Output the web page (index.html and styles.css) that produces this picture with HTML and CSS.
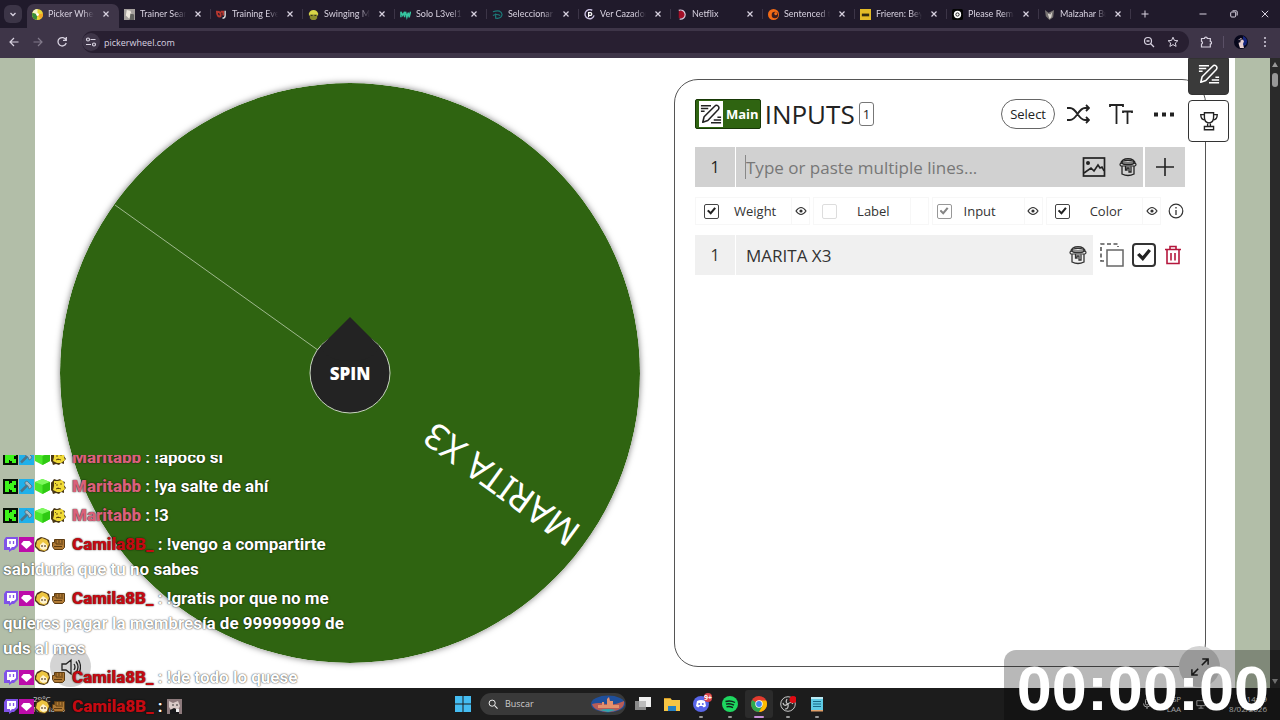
FILE: index.html
```
<!DOCTYPE html>
<html lang="es">
<head>
    <meta charset="UTF-8">
    <title>Picker Wheel</title>
    <link rel="stylesheet" href="styles.css">
</head>
<body>

<!-- shared icons -->
<svg class="sprite" aria-hidden="true">
    <symbol id="close" viewBox="0 0 8 8"><path d="M1.5 1.5l5 5M6.5 1.5l-5 5" fill="none" stroke="currentColor" stroke-width="1.2"/></symbol>
    <symbol id="edit" viewBox="0 0 24 24">
        <path d="M1 3h11M1 6h8M1 9h4M19 15.500h4M15 18.500h8M12 21.500h11" fill="none" stroke="currentColor" stroke-width="1.800"/>
        <path d="M3 21l1.500-6L16 3.500a2.500 2.500 0 0 1 4 3.500L8.500 19z" fill="none" stroke="currentColor" stroke-width="1.700" stroke-linejoin="round"/>
    </symbol>
    <symbol id="bucket" viewBox="0 0 20 20">
        <path d="M3 7C2 0 18 0 17 7" fill="none" stroke="currentColor" stroke-width="1.300"/>
        <ellipse cx="10" cy="5.500" rx="6" ry="2.200" fill="none" stroke="currentColor" stroke-width="1.300"/>
        <rect x="2" y="6" width="16" height="3" rx="1.500" fill="none" stroke="currentColor" stroke-width="1.200"/>
        <path d="M4 9v8q6 3 12 0V9M7.500 9v4h1.500v-2h2v4h2V9.500" fill="none" stroke="currentColor" stroke-width="1.300"/>
    </symbol>
    <symbol id="eye" viewBox="0 0 12 10"><path d="M1 5Q6-2 11 5Q6 12 1 5z" fill="none" stroke="currentColor" stroke-width="1.200"/><circle cx="6" cy="5" r="1.600" fill="currentColor"/></symbol>

    <symbol id="b-kick" viewBox="0 0 15 15"><path d="M0 0h15v15H0z" fill="#061006"/><path d="M2 2h4v3h1V4h2V2h4v4h-2v3h2v4H9v-2H7v-1H6v3H2z" fill="#3df51a"/></symbol>
    <symbol id="b-mod" viewBox="0 0 15 15"><path d="M0 0h15v15H0z" fill="#1fb0ea"/><path d="M2 12.500l6-6" stroke="#4f7488" stroke-width="2.500"/><path d="M6 3l2-1 5 5-1 2-2 1-1-3-3-2z" fill="#a4bcc6" stroke="#4a6a7a" stroke-width=".7"/></symbol>
    <symbol id="b-cube" viewBox="0 0 15 15"><path d="M7.500 0L15 3v8l-7.500 4L0 11V3z" fill="#4be82a"/><path d="M0 3l7.500-3L15 3 7.500 6z" fill="#7cf95c"/><path d="M7.500 6L15 3v8l-7.500 4z" fill="#2fc913"/></symbol>
    <symbol id="b-face" viewBox="0 0 15 15"><path d="M3 0l3 1 3-1 2 2 3 1-1 3 2 3-2 2v3l-3-1-2 2-3-1-3 1-1-3-3-2 2-3-1-3 2-1z" fill="#493715"/><path d="M3 2l4 0 4-1 2 3 0 3 1 3-4 3-4 0-4-2 1-4z" fill="#f0da36"/><path d="M5 6h2M9 5h2M5 10l2-1 3 1M4 4l1 1" stroke="#6b5010"/></symbol>
    <symbol id="b-twitch" viewBox="0 0 15 15"><path d="M3 0h12v9l-4 4H9l-3 2v-2H1V3z" fill="#8052e8"/><path d="M4 2h9v6l-2 2H9l-2 2v-2H4z" fill="#fff"/><path d="M7 4v3M10.500 4v3" stroke="#8052e8" stroke-width="1.300"/></symbol>
    <symbol id="b-gem" viewBox="0 0 15 15"><path d="M0 0h15v15H0z" fill="#bd0caa"/><path d="M4.500 4h6L13 7l-5.500 5L2 7z" fill="#fff"/></symbol>
    <symbol id="b-blond" viewBox="0 0 15 15"><path d="M2 2l4-2 4 1 4 2 1 5-2 5-4 2-5-1-4-4V6z" fill="#4c3519"/><path d="M2 4l5-3 5 2 2 4-2 5-2 2-5-1-4-4z" fill="#edc541"/><path d="M5 8l3-3 4 3v4l-4 1-3-2z" fill="#fff3cf"/><path d="M7 8v2M10 8v2" stroke="#3b2511"/></symbol>
    <symbol id="b-fist" viewBox="0 0 15 15"><path d="M3.500 2.500h10v8l-2 2h-8l-2-3v-4h2z" fill="#b07a35" stroke="#5d3c12"/><path d="M5 3v4h7M8 3v3M11 3v3M3 9.500h8" fill="none" stroke="#5d3c12"/></symbol>
</svg>

<header class="browser">
    <div class="tab-strip">
        <button class="tab-search" aria-label="Search tabs"><svg viewBox="0 0 8 8"><path d="M1.500 3L4 5.500 6.500 3" fill="none" stroke="currentColor" stroke-width="1.300"/></svg></button>
        <nav class="tabs">
            <div class="tab active">
                <svg class="favicon" viewBox="0 0 12 12"><circle cx="6" cy="6" r="6" fill="#e9d736"/><path d="M6 6V0a6 6 0 0 0-5.500 4z" fill="#f2f2c8"/><path d="M6 6L.5 4A6 6 0 0 0 5 12z" fill="#378d38"/><path d="M6 6l6-1a6 6 0 0 1-3 6z" fill="#f5a524"/><circle cx="6" cy="6" r="1.500" fill="#fff"/></svg>
                <span class="tab-title">Picker Wheel</span><button class="tab-close" aria-label="Close"><svg><use href="#close"/></svg></button>
            </div>
            <div class="tab">
                <svg class="favicon" viewBox="0 0 12 12"><path d="M0 0h12v12H0z" fill="#a6a19e"/><path d="M3 1l4 1 2 5-3 4-4-4z" fill="#eee8df"/><path d="M7 5l4 1v6H6z" fill="#60615e"/></svg>
                <span class="tab-title">Trainer Search</span><button class="tab-close" aria-label="Close"><svg><use href="#close"/></svg></button>
            </div>
            <div class="tab">
                <svg class="favicon" viewBox="0 0 12 12"><path d="M1 3q5 0 4 5-4 1-4-5zM5 3h3v4" fill="none" stroke="#b5372f" stroke-width="2"/><path d="M10 2v5q0 3-3 3" fill="none" stroke="#ddd" stroke-width="1.500"/></svg>
                <span class="tab-title">Training Events</span><button class="tab-close" aria-label="Close"><svg><use href="#close"/></svg></button>
            </div>
            <div class="tab">
                <svg class="favicon" viewBox="0 0 12 12"><path d="M1 5q1-4 5-4t5 4v2H1z" fill="#d9d649"/><path d="M2 6h8v4l-2 2H4l-2-2z" fill="#8c8d2d"/><path d="M3 7h2M7 7h2" stroke="#222"/></svg>
                <span class="tab-title">Swinging Maniac</span><button class="tab-close" aria-label="Close"><svg><use href="#close"/></svg></button>
            </div>
            <div class="tab">
                <svg class="favicon" viewBox="0 0 12 12"><path d="M1 9V3l2 4 2-4v6M6 3l1.500 6L9 4l1 5 1.500-6" fill="none" stroke="#35c6a0" stroke-width="1.600"/></svg>
                <span class="tab-title">Solo L3vel1ng</span><button class="tab-close" aria-label="Close"><svg><use href="#close"/></svg></button>
            </div>
            <div class="tab">
                <svg class="favicon" viewBox="0 0 12 12"><path d="M1 3q9-3 10 3-1 5-7 4V5M1 7q4-2 8 0" fill="none" stroke="#1c7a79" stroke-width="1.300"/></svg>
                <span class="tab-title">Seleccionar perfil</span><button class="tab-close" aria-label="Close"><svg><use href="#close"/></svg></button>
            </div>
            <div class="tab">
                <svg class="favicon" viewBox="0 0 12 12"><path d="M9 1.500A5 5 0 1 0 11 7" fill="none" stroke="#c8bfe0" stroke-width="1.500"/><path d="M5 9V4h2a1.500 1.500 0 0 1 0 3H5" fill="none" stroke="#fff" stroke-width="1.300"/></svg>
                <span class="tab-title">Ver Cazadores</span><button class="tab-close" aria-label="Close"><svg><use href="#close"/></svg></button>
            </div>
            <div class="tab">
                <svg class="favicon" viewBox="0 0 12 12"><path d="M3 2h3a4 4 0 0 1 0 8H3z" fill="#a30f27"/><path d="M3 1.500a5 5 0 1 1 1 9.500" fill="none" stroke="#dcc8dc" stroke-width="1.300"/></svg>
                <span class="tab-title">Netflix</span><button class="tab-close" aria-label="Close"><svg><use href="#close"/></svg></button>
            </div>
            <div class="tab">
                <svg class="favicon" viewBox="0 0 12 12"><circle cx="6" cy="6" r="6" fill="#f36b16"/><circle cx="7.500" cy="6.500" r="3.500" fill="#3b1d20"/><circle cx="8.500" cy="5" r="1.700" fill="#f36b16"/></svg>
                <span class="tab-title">Sentenced to Be</span><button class="tab-close" aria-label="Close"><svg><use href="#close"/></svg></button>
            </div>
            <div class="tab">
                <svg class="favicon" viewBox="0 0 12 12"><path d="M0 0h12v12H0z" fill="#e3bb27"/><path d="M2 5h8v3H2z" fill="#332b10"/></svg>
                <span class="tab-title">Frieren: Beyond</span><button class="tab-close" aria-label="Close"><svg><use href="#close"/></svg></button>
            </div>
            <div class="tab">
                <svg class="favicon" viewBox="0 0 12 12"><rect width="12" height="12" rx="2" fill="#030303"/><circle cx="6" cy="6" r="4" fill="#fff"/><circle cx="6" cy="6" r="1.800" fill="none" stroke="#111"/></svg>
                <span class="tab-title">Please Remain</span><button class="tab-close" aria-label="Close"><svg><use href="#close"/></svg></button>
            </div>
            <div class="tab">
                <svg class="favicon" viewBox="0 0 12 12"><path d="M1 1l4 3 6-3-1 8-4 3-4-4z" fill="#777372"/><path d="M4 5l3 1 2-3-1 6-2 2z" fill="#d8d3cd"/></svg>
                <span class="tab-title">Malzahar Build</span><button class="tab-close" aria-label="Close"><svg><use href="#close"/></svg></button>
            </div>
        </nav>
        <button class="new-tab" aria-label="New tab"><svg viewBox="0 0 8 8"><path d="M4 .5v7M.5 4h7" stroke="currentColor" fill="none"/></svg></button>
        <div class="window-buttons">
            <button aria-label="Minimize"><svg viewBox="0 0 8 8"><path d="M.5 4h7" stroke="currentColor"/></svg></button>
            <button aria-label="Restore"><svg viewBox="0 0 8 8"><rect x=".7" y="2" width="5" height="5" rx="1" fill="none" stroke="currentColor"/><path d="M2.500.8h3.700a1 1 0 0 1 1 1v3.700" fill="none" stroke="currentColor"/></svg></button>
            <button aria-label="Close window"><svg viewBox="0 0 8 8"><path d="M.8.8l6.400 6.400M7.200.8L.8 7.200" stroke="currentColor"/></svg></button>
        </div>
    </div>
    <div class="toolbar">
        <button aria-label="Back"><svg viewBox="0 0 12 12"><path d="M10.500 6H2M6 2L2 6l4 4" fill="none" stroke="currentColor" stroke-width="1.200"/></svg></button>
        <button class="dim" aria-label="Forward"><svg viewBox="0 0 12 12"><path d="M1.500 6H10M6 2l4 4-4 4" fill="none" stroke="currentColor" stroke-width="1.200"/></svg></button>
        <button aria-label="Reload"><svg viewBox="0 0 12 12"><path d="M10 4A4.200 4.200 0 1 0 10.200 7M10.300 1v3.300H7" fill="none" stroke="currentColor" stroke-width="1.300"/></svg></button>
        <div class="omnibox">
            <button class="site-info" aria-label="Site information"><svg viewBox="0 0 12 12"><path d="M5.500 3.500h5M1 8.500h5" stroke="currentColor" stroke-width="1.200"/><circle cx="3" cy="3.500" r="1.500" fill="none" stroke="currentColor" stroke-width="1.200"/><circle cx="9" cy="8.500" r="1.500" fill="none" stroke="currentColor" stroke-width="1.200"/></svg></button>
            <input type="text" value="pickerwheel.com" aria-label="Address">
            <button aria-label="Zoom"><svg viewBox="0 0 12 12"><circle cx="5" cy="5" r="3.500" fill="none" stroke="currentColor" stroke-width="1.200"/><path d="M7.500 7.500l3.500 3.500M3.500 5h3" stroke="currentColor" stroke-width="1.300"/></svg></button>
            <button aria-label="Bookmark"><svg viewBox="0 0 12 12"><path d="M6 1.200l1.400 3.200 3.500.3-2.600 2.300.8 3.400L6 8.600l-3.100 1.800.8-3.400L1.100 4.700l3.500-.3z" fill="none" stroke="currentColor"/></svg></button>
        </div>
        <button aria-label="Extensions"><svg viewBox="0 0 12 12"><path d="M1.500 2.500h3a1.400 1.400 0 0 1 2.800 0h3v3a1.200 1.200 0 0 1 0 2.500v3h-8.800V8a1.400 1.400 0 0 0 0-2.700z" fill="none" stroke="currentColor" stroke-width="1.200"/></svg></button>
        <span class="toolbar-sep"></span>
        <button aria-label="Profile"><svg class="avatar" viewBox="0 0 14 14"><circle cx="7" cy="7" r="7" fill="#07071b"/><path d="M9 1q6 3 3 9l-3 1z" fill="#15247c"/><path d="M4 5l3-2 3 3-1 3 1 4H6L5 10z" fill="#e8cfd0"/><path d="M3 5l6-1-3 2 1 1-3 1z" fill="#111026"/></svg></button>
        <button aria-label="Menu"><svg viewBox="0 0 12 12"><circle cx="6" cy="2" r="1" fill="currentColor"/><circle cx="6" cy="6" r="1" fill="currentColor"/><circle cx="6" cy="10" r="1" fill="currentColor"/></svg></button>
    </div>
</header>

<div class="viewport">
    <main class="page">
        <section class="wheel">
            <svg class="wheel-face" viewBox="0 0 580 580">
                <circle cx="290" cy="290" r="290" fill="#2f6411"/>
                <path d="M55 122l235 168" stroke="#9fb98e" stroke-width="1"/>
                <text transform="translate(290 290) rotate(216)" x="-279" y="12" class="wheel-text">MARITA X3</text>
            </svg>
            <button class="spin">
                <svg viewBox="0 0 84 98">
                    <circle cx="42" cy="56" r="40" fill="#232323" stroke="#c9d3c2"/>
                    <path d="M42 0l29 29q-4 15-29 15T13 29z" fill="#232323"/>
                </svg>
                <span>SPIN</span>
            </button>
        </section>

        <section class="panel">
            <div class="panel-head">
                <span class="mode"><svg><use href="#edit"/></svg>Main</span>
                <h1>INPUTS</h1>
                <span class="count">1</span>
                <div class="head-actions">
                    <button class="select-btn">Select</button>
                    <button aria-label="Shuffle"><svg viewBox="0 0 24 24"><path d="M1 6h3c7 0 8 12 15 12h4M1 18h3c7 0 8-12 15-12h4M20 3l3 3-3 3M20 15l3 3-3 3" fill="none" stroke="currentColor" stroke-width="1.800"/></svg></button>
                    <button aria-label="Text size"><svg viewBox="0 0 24 24"><path d="M1 5V3h13v2M7.500 3v19M14 11V9.500h9V11M18.500 9.500V22" fill="none" stroke="currentColor" stroke-width="1.800"/></svg></button>
                    <button aria-label="More"><svg viewBox="0 0 24 24"><path d="M2 10.500h4v4H2zM10 10.500h4v4h-4zM18 10.500h4v4h-4z" fill="currentColor"/></svg></button>
                </div>
            </div>

            <form class="add-row">
                <label for="entry">1</label>
                <div class="entry">
                    <input type="text" id="entry" placeholder="Type or paste multiple lines...">
                    <button type="button" aria-label="Image"><svg viewBox="0 0 24 24"><rect x="1.500" y="3" width="21" height="18" fill="none" stroke="currentColor" stroke-width="1.700"/><circle cx="6" cy="8" r="2" fill="currentColor"/><path d="M2 18l7-5 3 3 4-6 2 3 2-1 2 4" fill="none" stroke="currentColor" stroke-width="1.600"/></svg></button>
                    <button type="button" class="paint" aria-label="Color"><svg><use href="#bucket"/></svg></button>
                </div>
                <button type="button" class="add" aria-label="Add"><svg viewBox="0 0 20 20"><path d="M10 1v18M1 10h18" stroke="currentColor" stroke-width="1.600"/></svg></button>
            </form>

            <div class="options">
                <div class="option"><input type="checkbox" id="weight" checked><label for="weight">Weight</label><button aria-label="Show weight"><svg><use href="#eye"/></svg></button></div>
                <div class="option"><input type="checkbox" id="label" class="off"><label for="label">Label</label><span class="no-eye"></span></div>
                <div class="option fixed"><input type="checkbox" id="input" checked disabled><label for="input">Input</label><button aria-label="Show input"><svg><use href="#eye"/></svg></button></div>
                <div class="option"><input type="checkbox" id="color" checked><label for="color">Color</label><button aria-label="Show color"><svg><use href="#eye"/></svg></button></div>
                <button class="info" aria-label="Info"><svg viewBox="0 0 16 16"><circle cx="8" cy="8" r="6.800" fill="none" stroke="currentColor" stroke-width="1.200"/><path d="M8 7v5M8 4v1.500" stroke="currentColor" stroke-width="1.300"/></svg></button>
            </div>

            <div class="item">
                <span class="item-number">1</span>
                <div class="item-name"><input type="text" value="MARITA X3" aria-label="Entry 1"><button class="paint" aria-label="Color"><svg><use href="#bucket"/></svg></button></div>
                <button aria-label="Duplicate"><svg viewBox="0 0 24 24"><rect x="7" y="7" width="16" height="16" fill="none" stroke="#666" stroke-width="1.500"/><path d="M4 18H1V1h17v3" fill="none" stroke="#555" stroke-width="1.600" stroke-dasharray="4 2.500"/></svg></button>
                <input type="checkbox" class="big" aria-label="Enable entry 1" checked>
                <button class="trash" aria-label="Delete"><svg viewBox="0 0 18 20"><path d="M1 4.500h16M6 4V1.500h6V4M3 5v13.500h12V5M7 8v7.500M11 8v7.500" fill="none" stroke="currentColor" stroke-width="1.600"/></svg></button>
            </div>
        </section>

        <nav class="side-tabs">
            <button class="side-edit" aria-label="Inputs"><svg><use href="#edit"/></svg></button>
            <button aria-label="Results"><svg viewBox="0 0 24 24"><path d="M7 3h10v5q0 6-5 6T7 8zM7 5H3q0 6 5 6M17 5h4q0 6-5 6M10.500 14v4M13.500 14v4M7 18h10v3.500H7z" fill="none" stroke="currentColor" stroke-width="1.500"/></svg></button>
        </nav>
        <button class="round sound" aria-label="Sound"><svg viewBox="0 0 20 18"><path d="M1 6h4l5-4v14l-5-4H1zM13 6q2 3 0 6M15 3.500q4 5.500 0 11M17.500 2q4 7 0 14" fill="none" stroke="currentColor" stroke-width="1.300"/></svg></button>
        <button class="round full" aria-label="Full screen"><svg viewBox="0 0 20 20"><path d="M12 8l7-7M12.500 1H19v6.500M8 12l-7 7M1 12.500V19h6.500" fill="none" stroke="currentColor" stroke-width="1.700"/></svg></button>
    </main>
    <div class="scrollbar"><span class="up"></span><span class="thumb"></span><span class="down"></span></div>
</div>

<footer class="taskbar">
    <div class="weather"><span>29°C</span><span>Nublado</span></div>
    <div class="apps">
        <button aria-label="Start"><svg viewBox="0 0 16 16"><path d="M0 0h7.500v7.500H0zM8.500 0H16v7.500H8.500zM0 8.500h7.500V16H0zM8.500 8.500H16V16H8.500z" fill="#45bdf2"/></svg></button>
        <label class="search">
            <svg viewBox="0 0 12 12"><circle cx="5" cy="5" r="3.700" fill="none" stroke="#eee" stroke-width="1.200"/><path d="M8 8l3.500 3.500" stroke="#eee" stroke-width="1.300"/></svg>
            <input type="text" placeholder="Buscar">
            <svg class="scene" viewBox="0 0 34 18"><ellipse cx="17" cy="9" rx="17" ry="8.500" fill="#1f4f9b"/><path d="M1 9q7-2 14 0t18-3q1 6-6 9-10 4-20 0-5-2-6-6z" fill="#b85c58"/><path d="M7 10h4V7h2v3h3V4l2-2 1 4h3v4h6v3H7z" fill="#e4906d"/><path d="M8 15q10-2 17 0l-8 2z" fill="#2fa5b0"/></svg>
        </label>
        <button aria-label="Task view"><svg viewBox="0 0 16 16"><path d="M0 5h11v9H0z" fill="#8b8b8b"/><path d="M4 1h12v10H4z" fill="#efefef"/><path d="M4 5h7v6H4z" fill="#bcbcbc"/></svg></button>
        <button aria-label="Explorer"><svg viewBox="0 0 16 16"><path d="M0 2h6l2 2h8v11H0z" fill="#f6c544"/><path d="M4 10h8v5H4z" fill="#2580c3"/><path d="M0 2h6l1 1H0z" fill="#d59a25"/></svg></button>
        <button class="running" aria-label="Discord"><svg viewBox="0 0 16 16"><circle cx="8" cy="8" r="8" fill="#5865e8"/><path d="M4 5q4-2 8 0l1 5q-2 2-3 1l-.5-1h-3L6 11q-1 1-3-1z" fill="#fff"/><circle cx="6.200" cy="8" r="1" fill="#5865e8"/><circle cx="9.800" cy="8" r="1" fill="#5865e8"/></svg><span class="unread">9+</span></button>
        <button class="running" aria-label="Spotify"><svg viewBox="0 0 16 16"><circle cx="8" cy="8" r="8" fill="#1ed760"/><path d="M3.500 5.500q5-1.500 9.500 1M4 8.200q4-1.200 8 1M4.500 10.800q3-1 6.500.8" fill="none" stroke="#10231a" stroke-width="1.400"/></svg></button>
        <button class="running current" aria-label="Chrome"><svg viewBox="0 0 16 16"><circle cx="8" cy="8" r="8" fill="#e33b2e"/><path d="M8 8L1.100 4A8 8 0 0 0 8 16l3.500-6z" fill="#2da94f"/><path d="M8 4.500h7.200A8 8 0 0 1 8 16l3.500-6z" fill="#fdbd00"/><circle cx="8" cy="8" r="3.700" fill="#fff"/><circle cx="8" cy="8" r="2.900" fill="#4285f4"/></svg></button>
        <button class="running" aria-label="OBS"><svg viewBox="0 0 16 16"><circle cx="8" cy="8" r="7.300" fill="#222" stroke="#c8c8c8"/><path d="M7 3q-2 4 1 5M13 8q-2-3-5 0M5 13q4 0 3-5M3 7q1 4 5 1" fill="none" stroke="#c8c8c8" stroke-width="1.200"/><circle cx="13" cy="3.500" r="3.500" fill="#e00b13"/></svg></button>
        <button class="running" aria-label="Notepad"><svg viewBox="0 0 16 16"><path d="M2 1h12v14H2z" fill="#5ecbe5"/><path d="M2 1h12v2H2z" fill="#bce9f3"/><path d="M4 5.500h8M4 8h8M4 10.500h8" stroke="#176a87" stroke-width="1.200"/><path d="M2 14h12v1.500H2z" fill="#e2a16b"/></svg></button>
    </div>
    <div class="tray">
        <svg viewBox="0 0 10 10"><path d="M1.500 7L5 3.500 8.500 7" fill="none" stroke="currentColor"/></svg>
        <svg class="mic" viewBox="0 0 10 12"><rect x="3.500" y="1" width="3" height="6" rx="1.500" fill="none" stroke="currentColor"/><path d="M1.500 5.500q0 3.500 3.500 3.500t3.500-3.500M5 9v2" fill="none" stroke="currentColor"/></svg>
        <span class="lang">ESP<br>LAA</span>
        <svg class="net" viewBox="0 0 12 12"><path d="M1 2h10v6H1zM6 8v3M3 11h6" fill="none" stroke="currentColor"/></svg>
        <span class="clock">14:59<br>8/02/2026</span>
    </div>
</footer>

<!-- stream overlays -->
<ul class="chat">
    <li><svg><use href="#b-kick"/></svg><svg><use href="#b-mod"/></svg><svg><use href="#b-cube"/></svg><svg><use href="#b-face"/></svg><b class="pink">Maritabb</b> : !apoco si</li>
    <li><svg><use href="#b-kick"/></svg><svg><use href="#b-mod"/></svg><svg><use href="#b-cube"/></svg><svg><use href="#b-face"/></svg><b class="pink">Maritabb</b> : !ya salte de ahí</li>
    <li><svg><use href="#b-kick"/></svg><svg><use href="#b-mod"/></svg><svg><use href="#b-cube"/></svg><svg><use href="#b-face"/></svg><b class="pink">Maritabb</b> : !3</li>
    <li><svg><use href="#b-twitch"/></svg><svg><use href="#b-gem"/></svg><svg><use href="#b-blond"/></svg><svg><use href="#b-fist"/></svg><b class="red">Camila8B_</b> : !vengo a compartirte sabiduria que tu no sabes</li>
    <li><svg><use href="#b-twitch"/></svg><svg><use href="#b-gem"/></svg><svg><use href="#b-blond"/></svg><svg><use href="#b-fist"/></svg><b class="red">Camila8B_</b> : !gratis por que no me quieres pagar la membresía de 99999999 de uds al mes</li>
    <li><svg><use href="#b-twitch"/></svg><svg><use href="#b-gem"/></svg><svg><use href="#b-blond"/></svg><svg><use href="#b-fist"/></svg><b class="red">Camila8B_</b> : !de todo lo quese</li>
    <li><svg><use href="#b-twitch"/></svg><svg><use href="#b-gem"/></svg><svg><use href="#b-blond"/></svg><svg><use href="#b-fist"/></svg><b class="red">Camila8B_</b> : <svg viewBox="0 0 15 15"><path d="M0 0h15v15H0z" fill="#8d7a7c"/><path d="M2 2l4 2 5-2 2 5-2 4H4L2 8z" fill="#d9cbc8"/><path d="M5 6h2M9 6h2" stroke="#333"/><path d="M3 11l4-2 5 2v4H3z" fill="#18181a"/><path d="M9 10h3v3H9z" fill="#eee"/></svg></li>
</ul>
<div class="timer">00:00:00</div>

</body>
</html>
```
FILE: styles.css
```
* {
    box-sizing: border-box;
}
body {
    position: relative;
    display: flex;
    flex-direction: column;
    min-height: 100vh;
    margin: 0;
    overflow: hidden;
    font-family: "Open Sans", "Noto Sans", sans-serif;
    color: #222;
}
button {
    display: flex;
    align-items: center;
    justify-content: center;
    padding: 0;
    border: none;
    background: none;
    color: inherit;
    font: inherit;
    cursor: pointer;
}
input {
    min-width: 0;
    border: none;
    background: none;
    color: inherit;
    font: inherit;
    outline: none;
}
svg {
    display: block;
    flex-shrink: 0;
}
.sprite {
    position: absolute;
    width: 0;
    height: 0;
}

/* browser */
.browser {
    background: #201a2b;
    color: #d8d2e0;
}
.tab-strip {
    display: flex;
    align-items: center;
    height: 28px;
    padding-left: 4px;
}
.tab-search {
    width: 18px;
    height: 18px;
    margin-right: 5px;
    border-radius: 6px;
    background: #3c3547;
}
.tab-search svg, .tab-close svg, .new-tab svg, .window-buttons svg {
    width: 8px;
    height: 8px;
}
.tabs {
    display: flex;
    align-self: flex-end;
    min-width: 0;
}
.tab {
    display: flex;
    align-items: center;
    width: 92px;
    min-width: 0;
    height: 24px;
    padding: 0 9px 4px 5px;
    background: linear-gradient(#3c3547, #3c3547) right 5px / 1px 10px no-repeat;
}
.tab.active {
    border-radius: 7px 7px 0 0;
    background: #3e3548;
}
.favicon {
    width: 11px;
    height: 11px;
    margin-right: 5px;
}
.tab-title {
    flex: 1;
    overflow: hidden;
    font-family: Lato, sans-serif;
    font-size: 9px;
    line-height: 12px;
    white-space: nowrap;
    mask-image: linear-gradient(to right, #000 75%, transparent);
}
.tab-close {
    width: 8px;
    margin-left: 8px;
}
.new-tab {
    width: 28px;
}
.window-buttons {
    display: flex;
    margin-left: auto;
}
.window-buttons button {
    width: 31px;
}
.toolbar {
    display: flex;
    align-items: center;
    height: 30px;
    padding: 0 3px 2px 2px;
    background: #3e3548;
}
.toolbar button {
    width: 24px;
}
.toolbar svg {
    width: 12px;
    height: 12px;
}
.toolbar .dim {
    color: #827a8b;
}
.omnibox {
    display: flex;
    flex: 1;
    align-items: center;
    height: 22px;
    margin: 0 5px 0 8px;
    padding: 0 4px 0 0;
    border-radius: 11px;
    background: #281f31;
}
.omnibox input {
    flex: 1;
    padding: 0 4px;
    font-size: 9px;
}
.toolbar .site-info {
    width: 18px;
    height: 18px;
    border-radius: 9px;
    background: #3e3548;
}
.toolbar-sep {
    width: 1px;
    height: 12px;
    margin: 0 5px;
    background: #5a5066;
}
.toolbar .avatar {
    width: 14px;
    height: 14px;
}

/* page */
.viewport {
    display: flex;
    flex: 1;
    background: #b2bea8;
}
.page {
    position: relative;
    display: grid;
    grid-template-columns: minmax(0, 580fr) minmax(0, 532fr);
    gap: 34px;
    width: 1200px;
    max-width: 100%;
    margin: 0 auto;
    padding: 21px 29px 21px 25px;
    background: #fff;
}
.wheel {
    position: relative;
    align-self: center;
}
.wheel-face {
    width: 100%;
    height: auto;
    border-radius: 50%;
    box-shadow: 0 0 6px rgba(0, 0, 0, 0.5);
}
.wheel-text {
    fill: #fff;
    font-family: "Noto Sans", sans-serif;
    font-size: 36px;
}
.spin {
    position: absolute;
    top: 50%;
    left: 50%;
    width: 84px;
    height: 112px;
    transform: translate(-50%, -50%);
    color: #fff;
    font-size: 17px;
    font-weight: 800;
}
.spin svg {
    position: absolute;
    top: 0;
    left: 0;
    width: 84px;
    height: 98px;
}
.spin span {
    position: relative;
}
.panel {
    min-width: 0;
    padding: 19px 20px;
    border: 1px solid #555;
    border-radius: 24px;
}
.panel-head {
    display: flex;
    align-items: center;
    height: 30px;
    margin-bottom: 18px;
}
.mode {
    display: flex;
    align-items: center;
    gap: 3px;
    height: 30px;
    padding: 0 1px 0 3px;
    border: 1px solid #173806;
    border-radius: 2px;
    background: #2f6411;
    color: #fff;
    font-size: 13px;
    font-weight: 700;
}
.mode svg {
    width: 24px;
    height: 26px;
    padding: 1px;
    background: #fff;
    color: #222;
}
h1 {
    margin: 0 4px;
    font-size: 26px;
    font-weight: 500;
    line-height: 30px;
}
.count {
    padding: 0 3px;
    border: 1px solid #777;
    border-radius: 3px;
    font-size: 13px;
    line-height: 22px;
}
.head-actions {
    display: flex;
    align-items: center;
    gap: 19px;
    margin-left: auto;
    padding-right: 9px;
}
.head-actions svg {
    width: 24px;
    height: 24px;
}
.select-btn {
    height: 30px;
    margin-right: -8px;
    padding: 0 8px;
    border: 1px solid #666;
    border-radius: 15px;
    font-size: 13px;
}
.add-row {
    display: flex;
    gap: 1px;
    height: 40px;
    margin-bottom: 10px;
}
.add-row label, .entry, .add {
    background: #d1d1d1;
}
.add-row label, .item-number {
    width: 40px;
    font-size: 16px;
    line-height: 40px;
    text-align: center;
}
.entry {
    display: flex;
    flex: 1;
    align-items: center;
    gap: 12px;
    min-width: 0;
    padding: 0 5px 0 9px;
}
.entry input {
    flex: 1;
    height: 24px;
    padding: 0;
    border-left: 1px solid #888;
    font-size: 17px;
}
.entry input::placeholder {
    color: #777;
}
.entry svg {
    width: 24px;
    height: 24px;
}
.add {
    width: 40px;
    margin-left: 1px;
}
.add svg, .paint svg, .entry .paint svg {
    width: 20px;
    height: 20px;
}
input[type="checkbox"] {
    display: grid;
    place-content: center;
    width: 15px;
    height: 15px;
    margin: 0;
    border: 1px solid #444;
    border-radius: 2px;
    appearance: none;
}
input[type="checkbox"]:checked::before {
    content: "";
    width: 9px;
    height: 9px;
    background: #222;
    clip-path: polygon(0 50%, 18% 35%, 40% 58%, 82% 8%, 100% 22%, 42% 92%);
}
input[type="checkbox"]:disabled {
    opacity: 0.55;
}
input[type="checkbox"].off {
    border-color: #ddd;
}
.options {
    display: flex;
    gap: 3px;
    height: 28px;
    margin-bottom: 10px;
    color: #333;
    font-size: 13px;
}
.option {
    display: flex;
    flex: 1;
    align-items: center;
    padding-left: 8px;
    border: 1px solid #f7f7f7;
}
.option label {
    flex: 1;
    text-align: center;
}
.option.fixed {
    padding-left: 4px;
}
.option.fixed label {
    padding-right: 16px;
}
.option button, .no-eye {
    align-self: stretch;
    width: 18px;
    border-left: 1px solid #f7f7f7;
}
.option svg {
    width: 12px;
    height: 10px;
}
.info {
    width: 18px;
    margin-left: 3px;
}
.info svg {
    width: 16px;
    height: 16px;
}
.item {
    display: flex;
    align-items: center;
    height: 40px;
    color: #333;
}
.item-number, .item-name {
    background: #f0f0f0;
}
.item-name {
    display: flex;
    flex: 1;
    align-items: center;
    height: 40px;
    min-width: 0;
    margin: 0 7px 0 1px;
    padding: 0 5px 0 10px;
}
.item-name input {
    flex: 1;
    padding: 0;
    font-size: 17px;
}
.item > button svg {
    width: 24px;
    height: 24px;
}
input[type="checkbox"].big {
    width: 24px;
    height: 24px;
    margin: 0 8px;
    border: 2px solid #333;
    border-radius: 4px;
}
input[type="checkbox"].big:checked::before {
    width: 14px;
    height: 14px;
}
.item .trash {
    width: 18px;
    margin-right: 3px;
    color: #b5173c;
}
.item .trash svg {
    width: 18px;
    height: 20px;
}
.side-tabs {
    position: absolute;
    top: 0;
    right: 6px;
    width: 41px;
}
.side-tabs button {
    width: 41px;
    height: 42px;
    border: 1px solid #333;
    border-radius: 4px;
    background: #fff;
}
.side-tabs svg {
    width: 22px;
    height: 24px;
}
.side-tabs .side-edit {
    height: 37px;
    margin-bottom: 5px;
    padding-bottom: 5px;
    border-radius: 0 0 4px 4px;
    background: #3a3a3a;
    color: #fff;
}
.round {
    position: absolute;
    bottom: 1px;
    width: 41px;
    height: 41px;
    border-radius: 50%;
    background: #d4d4d4;
}
.round svg {
    width: 20px;
    height: 18px;
}
.sound {
    left: 15px;
}
.full {
    right: 15px;
}
.scrollbar {
    display: flex;
    flex-direction: column;
    align-items: center;
    width: 10px;
    padding: 4px 0;
    background: #2a2a2a;
}
.up, .down {
    border: 3px solid transparent;
    border-top: none;
    border-bottom: 5px solid #999;
}
.thumb {
    width: 6px;
    height: 14px;
    margin: 6px 0 auto;
    border-radius: 3px;
    background: #999;
}
.down {
    border-top: 5px solid #999;
    border-bottom: none;
}

/* taskbar */
.taskbar {
    display: grid;
    grid-template-columns: 1fr auto 1fr;
    align-items: center;
    height: 32px;
    background: #1c1c1c;
    color: #ddd;
    font-size: 8px;
    line-height: 10px;
}
.weather {
    display: flex;
    flex-direction: column;
    padding-left: 33px;
}
.apps {
    display: flex;
    align-items: center;
    gap: 1px;
}
.apps button {
    position: relative;
    width: 28px;
    height: 28px;
}
.apps button svg {
    width: 16px;
    height: 16px;
}
.running::after {
    content: "";
    position: absolute;
    bottom: 0;
    width: 4px;
    height: 2px;
    border-radius: 1px;
    background: #999;
}
.current {
    border-radius: 3px;
    background: #2b2b2b;
}
.current::after {
    width: 10px;
    background: #c890d8;
}
.apps .unread {
    position: absolute;
    top: 3px;
    right: 3px;
    border-radius: 5px;
    background: #d9444c;
    color: #fff;
    font-size: 7px;
    font-weight: 700;
    line-height: 9px;
}
.search {
    display: flex;
    align-items: center;
    width: 146px;
    height: 22px;
    margin: 0 2px;
    padding: 0 1px 0 8px;
    border-radius: 11px;
    background: #393939;
}
.search svg {
    width: 10px;
    height: 10px;
}
.search input {
    flex: 1;
    padding: 0 7px;
    font-size: 9px;
}
.search input::placeholder {
    color: #ccc;
}
.search .scene {
    width: 34px;
    height: 18px;
}
.tray {
    display: flex;
    align-items: center;
    justify-content: flex-end;
    gap: 15px;
    padding-right: 13px;
}
.tray svg {
    width: 10px;
    height: 12px;
}
.lang {
    text-align: right;
}
.clock {
    margin-left: 8px;
    text-align: right;
}

/* stream overlays */
.chat {
    position: absolute;
    bottom: 0;
    left: 0;
    display: flex;
    flex-direction: column;
    justify-content: flex-end;
    gap: 4px;
    width: 360px;
    height: 265px;
    margin: 0;
    padding: 0 8px 1px 3px;
    overflow: hidden;
    color: #fff;
    font-family: Roboto, sans-serif;
    font-size: 17px;
    font-weight: 700;
    line-height: 25px;
    text-shadow: 0 0 1px rgba(0, 0, 0, 0.7), 0 0 2px rgba(0, 0, 0, 0.5);
    list-style: none;
}
.chat svg {
    display: inline-block;
    width: 15px;
    height: 15px;
    margin-right: 1px;
    vertical-align: -2px;
}
.chat b {
    margin-left: 5px;
}
.pink {
    color: #d9607a;
}
.red {
    color: #c40a12;
}
.timer {
    position: absolute;
    right: 0;
    bottom: 0;
    height: 70px;
    padding: 0 11px 0 13px;
    border-radius: 12px 0 0 0;
    background: rgba(0, 0, 0, 0.28);
    color: #fff;
    font-family: "Liberation Sans", Arial, sans-serif;
    font-size: 63px;
    font-weight: 700;
    line-height: 76px;
}
```
